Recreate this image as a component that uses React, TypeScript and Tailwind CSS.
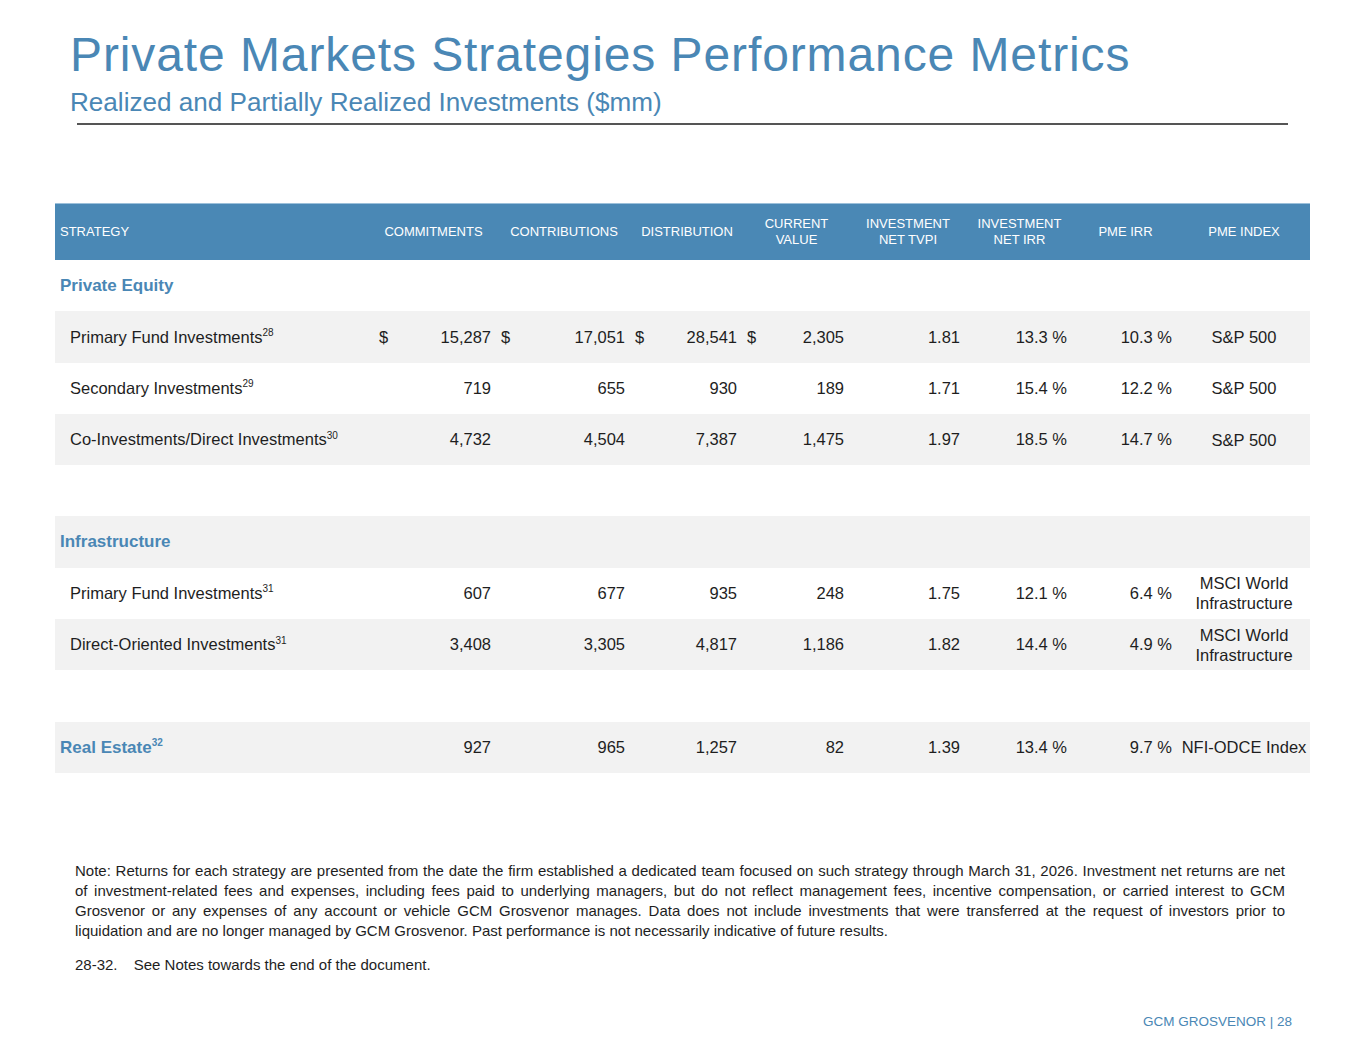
import React from "react";

type Row =
  | { kind: "section"; label: string; sup?: string; values?: string[]; dollar?: boolean }
  | { kind: "item"; label: string; sup: string; values: string[]; dollar?: boolean; index: string[] }
  | { kind: "blank" };

const rows: Row[] = [
  { kind: "section", label: "Private Equity" },
  {
    kind: "item",
    label: "Primary Fund Investments",
    sup: "28",
    dollar: true,
    values: ["15,287", "17,051", "28,541", "2,305", "1.81", "13.3 %", "10.3 %"],
    index: ["S&P 500"],
  },
  {
    kind: "item",
    label: "Secondary Investments",
    sup: "29",
    values: ["719", "655", "930", "189", "1.71", "15.4 %", "12.2 %"],
    index: ["S&P 500"],
  },
  {
    kind: "item",
    label: "Co-Investments/Direct Investments",
    sup: "30",
    values: ["4,732", "4,504", "7,387", "1,475", "1.97", "18.5 %", "14.7 %"],
    index: ["S&P 500"],
  },
  { kind: "blank" },
  { kind: "section", label: "Infrastructure" },
  {
    kind: "item",
    label: "Primary Fund Investments",
    sup: "31",
    values: ["607", "677", "935", "248", "1.75", "12.1 %", "6.4 %"],
    index: ["MSCI World", "Infrastructure"],
  },
  {
    kind: "item",
    label: "Direct-Oriented Investments",
    sup: "31",
    values: ["3,408", "3,305", "4,817", "1,186", "1.82", "14.4 %", "4.9 %"],
    index: ["MSCI World", "Infrastructure"],
  },
  { kind: "blank" },
  {
    kind: "section",
    label: "Real Estate",
    sup: "32",
    values: ["927", "965", "1,257", "82", "1.39", "13.4 %", "9.7 %", "NFI-ODCE Index"],
  },
];

const headers = [
  ["COMMITMENTS"],
  ["CONTRIBUTIONS"],
  ["DISTRIBUTION"],
  ["CURRENT", "VALUE"],
  ["INVESTMENT", "NET TVPI"],
  ["INVESTMENT", "NET IRR"],
  ["PME IRR"],
  ["PME INDEX"],
];

const grid =
  "grid grid-cols-[315px_127px_134px_112px_107px_116px_107px_105px_132px]";

function Money({ value, dollar, first }: { value: string; dollar?: boolean; first?: boolean }) {
  return (
    <div className={`flex items-center justify-between pr-[6px] ${first ? "pl-[9px]" : "pl-[4px]"}`}>
      <span>{dollar ? "$" : ""}</span>
      <span>{value}</span>
    </div>
  );
}

function Cells({ values, dollar }: { values: string[]; dollar?: boolean }) {
  return (
    <>
      {values.slice(0, 4).map((v, i) => (
        <Money key={i} value={v} dollar={dollar} first={i === 0} />
      ))}
      {values.slice(4, 7).map((v, i) => (
        <div key={i} className="flex items-center justify-end pr-[6px]">
          {v}
        </div>
      ))}
    </>
  );
}

export default function App() {
  return (
    <div
      className="relative w-[1365px] h-[1055px] bg-white text-[#1e1e1e] overflow-hidden"
      style={{ fontFamily: '"Liberation Sans", Arial, sans-serif' }}
    >
      {/* Title */}
      <div className="pl-[70px] pt-[31px]">
        <h1 className="text-[48px] leading-none text-[#4a87b5] tracking-[0.9px]">
          Private Markets Strategies Performance Metrics
        </h1>
        <h2 className="mt-[9.8px] text-[26.1px] leading-none text-[#4a87b5]">
          Realized and Partially Realized Investments ($mm)
        </h2>
      </div>
      <div className="ml-[77px] mt-[8.6px] w-[1211px] h-[2px] bg-[#555555]" />

      {/* Table */}
      <div className="ml-[55px] mt-[77.5px] w-[1255px]">
        <div className={`${grid} h-[57px] bg-[#4a88b5] border-t border-[#9cc0da] text-white text-[13px] leading-[16px]`}>
          <div className="flex items-center pl-[5px]">STRATEGY</div>
          {headers.map((h, i) => (
            <div key={i} className="flex flex-col items-center justify-center text-center">
              {h.map((l) => (
                <span key={l}>{l}</span>
              ))}
            </div>
          ))}
        </div>

        {rows.map((r, i) => {
          const bg = i % 2 === 1 ? "bg-[#f2f2f2]" : "bg-white";
          if (r.kind === "blank") return <div key={i} className={`h-[51.3px] ${bg}`} />;
          if (r.kind === "section")
            return (
              <div key={i} className={`${grid} h-[51.3px] ${bg} text-[16.5px]`}>
                <div className="flex items-center pl-[5px] text-[17px] font-bold text-[#4a87b5]">
                  {r.label}
                  {r.sup && <sup className="text-[10px] -top-[4px] font-bold">{r.sup}</sup>}
                </div>
                {r.values && (
                  <>
                    <Cells values={r.values} />
                    <div className="flex items-center justify-center whitespace-nowrap">{r.values[7]}</div>
                  </>
                )}
              </div>
            );
          return (
            <div key={i} className={`${grid} h-[51.3px] ${bg} text-[16.5px]`}>
              <div className="flex items-center pl-[15px] whitespace-nowrap">
                {r.label}
                <sup className="text-[10px] -top-[4px]">{r.sup}</sup>
              </div>
              <Cells values={r.values} dollar={r.dollar} />
              <div className="flex flex-col items-center justify-center text-center leading-[20px]">
                {r.index.map((l) => (
                  <span key={l}>{l}</span>
                ))}
              </div>
            </div>
          );
        })}
      </div>

      {/* Note */}
      <div className="ml-[75px] mt-[88px] w-[1210px] text-[15px] leading-[20px] text-[#1e1e1e]">
        <p className="text-justify">
          Note: Returns for each strategy are presented from the date the firm established a dedicated team focused on
          such strategy through March 31, 2026. Investment net returns are net of investment-related fees and expenses,
          including fees paid to underlying managers, but do not reflect management fees, incentive compensation, or
          carried interest to GCM Grosvenor or any expenses of any account or vehicle GCM Grosvenor manages. Data does
          not include investments that were transferred at the request of investors prior to liquidation and are no
          longer managed by GCM Grosvenor. Past performance is not necessarily indicative of future results.
        </p>
        <p className="mt-[14px]">
          28-32.<span className="inline-block w-[12px]" /> See Notes towards the end of the document.
        </p>
      </div>

      {/* Footer */}
      <div className="absolute right-[73px] top-[1013px] text-[13.5px] leading-[18px] text-[#4a87b5]">
        GCM GROSVENOR | 28
      </div>
    </div>
  );
}
